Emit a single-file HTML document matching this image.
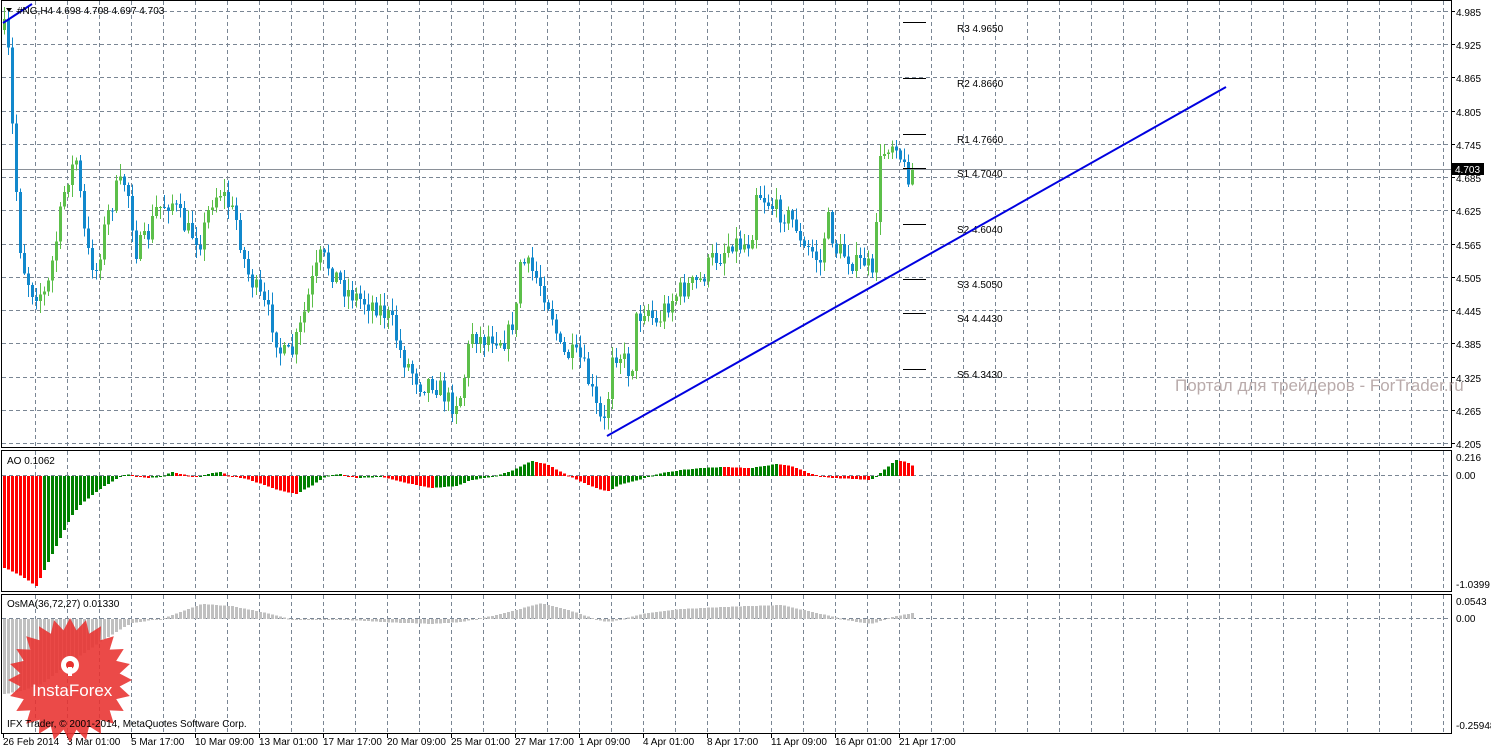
<!DOCTYPE html>
<html><head><meta charset="utf-8"><style>
html,body{margin:0;padding:0;background:#fff;}
svg{display:block;font-family:"Liberation Sans",sans-serif;}
</style></head><body>
<svg id="s" xmlns="http://www.w3.org/2000/svg" width="1491" height="749" viewBox="0 0 1491 749">
<rect width="1491" height="749" fill="#fff"/>
<g id="grid" stroke="#7a8694" stroke-width="1" stroke-dasharray="4,3" shape-rendering="crispEdges"></g>
<g id="frames" fill="none" stroke="#000" stroke-width="1" shape-rendering="crispEdges">
<rect x="1.5" y="0.5" width="1450" height="447"/>
<rect x="1.5" y="450.5" width="1450" height="141"/>
<rect x="1.5" y="594.5" width="1450" height="139"/>
</g>
<g id="axis" font-size="10" fill="#000"></g>
<text x="1175" y="391" font-size="17" fill="#b9abab">Портал для трейдеров - ForTrader.ru</text>
<line x1="2" y1="169.5" x2="1451" y2="169.5" stroke="#8a9098" shape-rendering="crispEdges"/>
<g id="candles" shape-rendering="crispEdges"></g>
<g id="ao" shape-rendering="crispEdges"></g>
<g id="osma" shape-rendering="crispEdges"></g>
<g id="piv" stroke="#000" shape-rendering="crispEdges"></g>
<g font-size="10" fill="#000">
<text x="957" y="32">R3 4.9650</text><text x="957" y="87">R2 4.8660</text><text x="957" y="143">R1 4.7660</text>
<text x="957" y="177">S1 4.7040</text><text x="957" y="233">S2 4.6040</text><text x="957" y="288">S3 4.5050</text>
<text x="957" y="322">S4 4.4430</text><text x="957" y="378">S5 4.3430</text>
</g>
<line x1="607" y1="436" x2="1226" y2="87" stroke="#0000e0" stroke-width="2"/>
<line x1="3" y1="23" x2="32" y2="4" stroke="#0000e0" stroke-width="2"/>
<rect x="1452" y="163" width="32" height="12" fill="#000"/>
<text x="1455" y="173" font-size="10" fill="#fff">4.703</text>
<g font-size="10" fill="#000">
<path d="M6 8 L12 8 L9 12 Z" fill="#000"/>
<text x="17" y="14">#NG,H4  4.698 4.708 4.697 4.703</text>
<text x="7" y="464">AO 0.1062</text>
<text x="7" y="607">OsMA(36,72,27) 0.01330</text>
</g>
<g>
<polygon id="star" fill="#e8312f" opacity="0.88"/>
<circle cx="70" cy="665" r="9" fill="#fff"/>
<circle cx="70" cy="665" r="4" fill="#e8312f"/>
<rect x="68" y="667" width="4" height="9" fill="#fff"/>
<text x="32" y="696" font-size="17" fill="#fff">InstaForex</text>
</g>
<text x="7" y="727" font-size="10" fill="#000">IFX Trader, © 2001-2014, MetaQuotes Software Corp.</text>
</svg>
<script>
var NS="http://www.w3.org/2000/svg";
function el(p,t,a,txt){var e=document.createElementNS(NS,t);for(var k in a)e.setAttribute(k,a[k]);if(txt)e.textContent=txt;document.getElementById(p).appendChild(e);return e;}
for(var x=35;x<1450;x+=32){el('grid','line',{x1:x+.5,y1:1,x2:x+.5,y2:447});el('grid','line',{x1:x+.5,y1:451,x2:x+.5,y2:591});el('grid','line',{x1:x+.5,y1:595,x2:x+.5,y2:733});}
var prices=["4.985","4.925","4.865","4.805","4.745","4.685","4.625","4.565","4.505","4.445","4.385","4.325","4.265","4.205"];
for(var i=0;i<14;i++){var y=Math.round(13+i*33.23);el('grid','line',{x1:2,y1:y-1.5,x2:1451,y2:y-1.5});el('axis','text',{x:1456,y:y+3},prices[i]);el('axis','line',{x1:1451,y1:y-1.5,x2:1455,y2:y-1.5,stroke:'#000'});}
el('grid','line',{x1:2,y1:475.5,x2:1451,y2:475.5});el('grid','line',{x1:2,y1:618.5,x2:1451,y2:618.5});
[["0.216",461],["0.00",479],["-1.0399",588],["0.0543",605],["0.00",622],["-0.25948",729]].forEach(function(a){el('axis','text',{x:1456,y:a[1]},a[0]);});
var tl=["26 Feb 2014","3 Mar 01:00","5 Mar 17:00","10 Mar 09:00","13 Mar 01:00","17 Mar 17:00","20 Mar 09:00","25 Mar 01:00","27 Mar 17:00","1 Apr 09:00","4 Apr 01:00","8 Apr 17:00","11 Apr 09:00","16 Apr 01:00","21 Apr 17:00"];
for(var i=0;i<tl.length;i++){var x=3+i*64;el('axis','text',{x:x,y:745},tl[i]);el('axis','line',{x1:x+.5,y1:734,x2:x+.5,y2:738,stroke:'#000'});}
function interp(k,x){if(x<=k[0][0])return k[0][1];for(var i=1;i<k.length;i++){if(x<=k[i][0]){var a=k[i-1],b=k[i];return a[1]+(b[1]-a[1])*(x-a[0])/(b[0]-a[0]);}}return k[k.length-1][1];}
var P=[[3,30],[8,60],[12,150],[20,260],[30,290],[45,295],[55,240],[65,180],[75,160],[85,250],[95,270],[105,220],[115,190],[125,180],[135,250],[145,240],[155,210],[170,200],[185,230],[200,240],[210,200],[220,190],[235,220],[245,270],[260,300],[270,320],[280,355],[290,355],[300,325],[310,285],[320,255],[330,270],[345,290],[360,300],[375,305],[390,320],[400,355],[410,370],[420,385],[430,380],[440,390],[450,405],[460,395],[470,330],[480,340],[490,335],[505,340],[515,310],[518,260],[530,270],[540,285],[550,310],[560,355],[570,355],[580,360],[590,390],[598,420],[605,425],[610,350],[620,355],[630,375],[635,320],[645,305],[655,325],[665,305],[680,290],[690,285],[700,280],[710,260],[720,255],[730,240],[740,245],[750,240],[755,190],[765,200],[775,210],[785,215],[795,225],[800,250],[810,250],[820,265],[825,215],[835,250],[845,255],[855,265],[865,260],[872,285],[877,170],[885,145],[895,140],[900,160],[905,175],[912,170]];
var seed=7;function rnd(){seed=(seed*16807)%2147483647;return seed/2147483647;}
var prev=interp(P,3);
for(var x=3;x<=912;x+=4){var c=interp(P,x)+(rnd()-.5)*22;var o=prev;var hi=Math.min(o,c)-rnd()*12-1,lo=Math.max(o,c)+rnd()*12+1;var bull=c<o;var col=bull?'#5cbf4a':'#1188cc';
el('candles','rect',{x:x+1,y:hi,width:1,height:lo-hi,fill:col});el('candles','rect',{x:x,y:Math.min(o,c),width:3,height:Math.max(1,Math.abs(c-o)),fill:col});prev=c;}
var A=[[3,-92],[10,-95],[20,-100],[35,-110],[40,-100],[50,-80],[60,-60],[70,-40],[80,-28],[100,-12],[115,-3],[125,2],[135,0],[145,-2],[160,-1],[170,4],[180,2],[195,-1],[210,3],[220,4],[228,0],[245,-3],[260,-8],[280,-15],[295,-18],[310,-10],[325,0],[340,2],[355,-2],[380,-1],[390,-3],[410,-8],[430,-12],[455,-10],[470,-4],[490,-1],[510,5],[530,15],[545,12],[560,4],[580,-6],[600,-14],[607,-15],[620,-8],[640,-3],[660,3],[680,6],[700,8],[720,9],[750,8],[775,12],[790,10],[810,2],[830,-2],[855,-3],[870,-4],[885,8],[895,16],[905,14],[912,10]];
var pv=null;
for(var x=3;x<=912;x+=4){var v=interp(A,x);var col=(pv===null||v>=pv)?'#008000':'#ff0000';if(x<40)col='#ff0000';el('ao','rect',{x:x,y:v>0?476-v:476,width:3,height:Math.max(1,Math.abs(v)),fill:col});pv=v;}
var O=[[3,-75],[20,-72],[40,-65],[60,-50],[100,-22],[130,-4],[160,0],[200,15],[230,13],[270,5],[290,0],[330,0],[380,-3],[430,-5],[460,-3],[500,5],[540,16],[570,8],[600,-2],[610,-3],[640,5],[680,10],[720,12],[780,14],[820,5],[850,-2],[870,-5],[890,2],[912,6]];
for(var x=3;x<=912;x+=4){var v=interp(O,x);el('osma','rect',{x:x,y:v>0?619-v:619,width:3,height:Math.max(1,Math.abs(v)),fill:'#c0c0c0'});}
[22,78,134,168,224,279,313,369].forEach(function(y){el('piv','line',{x1:903,y1:y+.5,x2:926,y2:y+.5});});
var pts=[],cx=70,cy=680,n=24;for(var i=0;i<n*2;i++){var r=i%2?50:62,a=Math.PI*i/n;pts.push((cx+r*Math.cos(a)).toFixed(1)+','+(cy+r*Math.sin(a)).toFixed(1));}
document.getElementById('star').setAttribute('points',pts.join(' '));
</script>
</body></html>
